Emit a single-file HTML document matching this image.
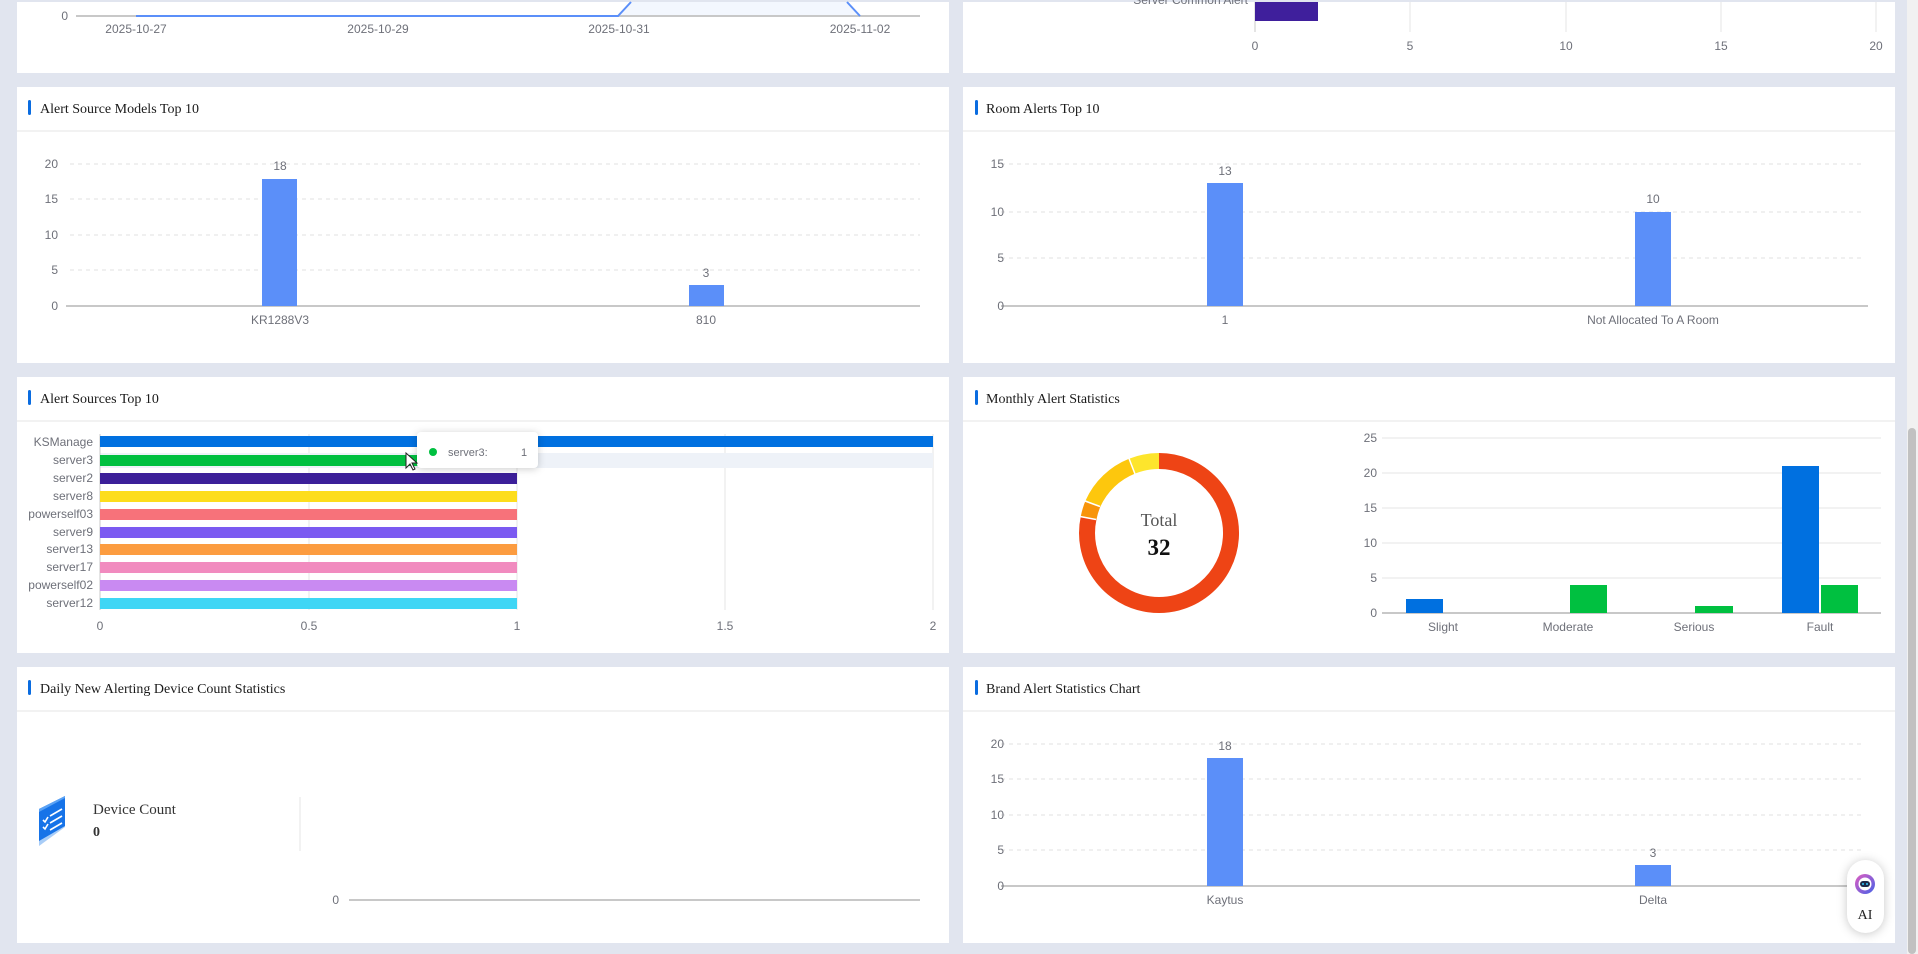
<!DOCTYPE html>
<html><head><meta charset="utf-8"><style>
html,body{margin:0;padding:0;width:1918px;height:954px;overflow:hidden;background:#e1e5ef}
svg{display:block}
.t{font-family:"Liberation Serif",serif;font-size:14px;fill:#1a1a1a}
.l{font-family:"Liberation Sans",sans-serif;font-size:12px;fill:#6e7079}
.g{stroke:#e0e0e0;stroke-width:1;stroke-dasharray:4 4}
.s{stroke:#e6e6e6;stroke-width:1}
.ax{stroke:#c8c8c8;stroke-width:2}
</style></head><body>
<svg width="1918" height="954" viewBox="0 0 1918 954" xmlns="http://www.w3.org/2000/svg">
<rect width="1918" height="954" fill="#e1e5ef"/>
<rect x="1907" y="0" width="11" height="954" fill="#f1f1f1"/>
<rect x="1908" y="428" width="8" height="526" rx="4" fill="#c1c1c1"/>

<rect x="17" y="2" width="932" height="71" fill="#fff"/>
<rect x="963" y="2" width="932" height="71" fill="#fff"/>
<g fill="#fff">
<rect x="17" y="87" width="932" height="276"/><rect x="963" y="87" width="932" height="276"/>
<rect x="17" y="377" width="932" height="276"/><rect x="963" y="377" width="932" height="276"/>
<rect x="17" y="667" width="932" height="276"/><rect x="963" y="667" width="932" height="276"/>
</g>
<g fill="#0a6ce0">
<rect x="28" y="100" width="3" height="15" rx="1.5"/><rect x="975" y="100" width="3" height="15" rx="1.5"/>
<rect x="28" y="390" width="3" height="15" rx="1.5"/><rect x="975" y="390" width="3" height="15" rx="1.5"/>
<rect x="28" y="680" width="3" height="15" rx="1.5"/><rect x="975" y="680" width="3" height="15" rx="1.5"/>
</g>
<g class="s">
<line x1="17" y1="131" x2="949" y2="131"/><line x1="963" y1="131" x2="1895" y2="131"/>
<line x1="17" y1="421" x2="949" y2="421"/><line x1="963" y1="421" x2="1895" y2="421"/>
<line x1="17" y1="711" x2="949" y2="711"/><line x1="963" y1="711" x2="1895" y2="711"/>
</g>
<text class="t" x="40" y="113">Alert Source Models Top 10</text>
<text class="t" x="986" y="113">Room Alerts Top 10</text>
<text class="t" x="40" y="403">Alert Sources Top 10</text>
<text class="t" x="986" y="403">Monthly Alert Statistics</text>
<text class="t" x="40" y="693">Daily New Alerting Device Count Statistics</text>
<text class="t" x="986" y="693">Brand Alert Statistics Chart</text>

<path d="M631 2 L847 2 L860 16 L618 16Z" fill="#f3f7fe"/>
<line x1="76" y1="16" x2="920" y2="16" class="ax"/>
<polyline points="136,16 618,16 631,2" fill="none" stroke="#5b8ff9" stroke-width="2"/>
<polyline points="847,2 860,16" fill="none" stroke="#5b8ff9" stroke-width="2"/>
<text class="l" x="68" y="20" text-anchor="end">0</text>
<g class="l" text-anchor="middle"><text x="136" y="33">2025-10-27</text><text x="378" y="33">2025-10-29</text><text x="619" y="33">2025-10-31</text><text x="860" y="33">2025-11-02</text></g>
<g class="s"><line x1="1410" y1="2" x2="1410" y2="32"/><line x1="1566" y1="2" x2="1566" y2="32"/><line x1="1721" y1="2" x2="1721" y2="32"/><line x1="1876" y1="2" x2="1876" y2="32"/></g>
<line x1="1255" y1="2" x2="1255" y2="32" stroke="#c8c8c8"/>
<rect x="1255" y="2" width="63" height="19" fill="#3f1f9c"/>
<text class="l" x="1248" y="4" text-anchor="end">Server Common Alert</text>
<g class="l" text-anchor="middle"><text x="1255" y="50">0</text><text x="1410" y="50">5</text><text x="1566" y="50">10</text><text x="1721" y="50">15</text><text x="1876" y="50">20</text></g>

<g class="g"><line x1="70" y1="164" x2="920" y2="164"/><line x1="70" y1="199" x2="920" y2="199"/><line x1="70" y1="235" x2="920" y2="235"/><line x1="70" y1="270" x2="920" y2="270"/></g>
<line x1="66" y1="306" x2="920" y2="306" class="ax"/>
<g class="l" text-anchor="end"><text x="58" y="168">20</text><text x="58" y="203">15</text><text x="58" y="239">10</text><text x="58" y="274">5</text><text x="58" y="310">0</text></g>
<rect x="262" y="179" width="35" height="127" fill="#5b8ff9"/>
<rect x="689" y="285" width="35" height="21" fill="#5b8ff9"/>
<g class="l" text-anchor="middle"><text x="280" y="170">18</text><text x="706" y="277">3</text><text x="280" y="324">KR1288V3</text><text x="706" y="324">810</text></g>
<g class="g"><line x1="1001" y1="164" x2="1864" y2="164"/><line x1="1001" y1="212" x2="1864" y2="212"/><line x1="1001" y1="258" x2="1864" y2="258"/></g>
<line x1="1001" y1="306" x2="1868" y2="306" class="ax"/>
<g class="l" text-anchor="end"><text x="1004" y="168">15</text><text x="1004" y="216">10</text><text x="1004" y="262">5</text><text x="1004" y="310">0</text></g>
<rect x="1207" y="183" width="36" height="123" fill="#5b8ff9"/>
<rect x="1635" y="212" width="36" height="94" fill="#5b8ff9"/>
<g class="l" text-anchor="middle"><text x="1225" y="175">13</text><text x="1653" y="203">10</text><text x="1225" y="324">1</text><text x="1653" y="324">Not Allocated To A Room</text></g>

<g class="s"><line x1="309" y1="434" x2="309" y2="610"/><line x1="517" y1="434" x2="517" y2="610"/><line x1="725" y1="434" x2="725" y2="610"/><line x1="933" y1="434" x2="933" y2="610"/></g>
<rect x="100" y="453" width="833" height="15" fill="#eef2f8"/>
<line x1="100" y1="434" x2="100" y2="610" stroke="#c8c8c8"/>
<rect x="100" y="436" width="833" height="11" fill="#0070e0"/>
<rect x="100" y="455" width="417" height="11" fill="#00c040"/>
<rect x="100" y="473" width="417" height="11" fill="#3c1f99"/>
<rect x="100" y="491" width="417" height="11" fill="#fddd1c"/>
<rect x="100" y="509" width="417" height="11" fill="#f7727a"/>
<rect x="100" y="527" width="417" height="11" fill="#7b5af1"/>
<rect x="100" y="544" width="417" height="11" fill="#fc9c40"/>
<rect x="100" y="562" width="417" height="11" fill="#f18bbf"/>
<rect x="100" y="580" width="417" height="11" fill="#c98af2"/>
<rect x="100" y="598" width="417" height="11" fill="#3fd6f5"/>
<g class="l" text-anchor="end">
<text x="93" y="446">KSManage</text><text x="93" y="464">server3</text><text x="93" y="482">server2</text><text x="93" y="500">server8</text><text x="93" y="518">powerself03</text><text x="93" y="536">server9</text><text x="93" y="553">server13</text><text x="93" y="571">server17</text><text x="93" y="589">powerself02</text><text x="93" y="607">server12</text></g>
<g class="l" text-anchor="middle"><text x="100" y="630">0</text><text x="309" y="630">0.5</text><text x="517" y="630">1</text><text x="725" y="630">1.5</text><text x="933" y="630">2</text></g>
<rect x="417" y="432" width="121" height="36" rx="4" fill="#fff" style="filter:drop-shadow(0 1px 4px rgba(0,0,0,.2))"/>
<circle cx="433" cy="452" r="4" fill="#00c040"/>
<text class="l" x="448" y="456" style="font-size:11px">server3:</text>
<text class="l" x="521" y="456" style="font-size:11px">1</text>
<path d="M406 453 L406 468 L410 464 L413 470 L415 469 L412 463 L417 463Z" fill="#fff" stroke="#222" stroke-width="1"/>

<g fill="none" stroke-width="16">
<path d="M1159 461 A72 72 0 1 1 1088.6 518" stroke="#ee4415"/>
<path d="M1088.6 518 A72 72 0 0 1 1093 503.5" stroke="#f8940a"/>
<path d="M1093 503.5 A72 72 0 0 1 1132 466.2" stroke="#fdc70d"/>
<path d="M1132 466.2 A72 72 0 0 1 1159 461" stroke="#fde52c"/>
</g>
<g stroke="#fff" stroke-width="1.5"><line x1="1080" y1="516.5" x2="1096" y2="519.5"/><line x1="1085" y1="501" x2="1100" y2="506.5"/><line x1="1129" y1="458.5" x2="1135" y2="474"/></g>
<text x="1159" y="526" text-anchor="middle" style="font-family:'Liberation Serif',serif;font-size:18px;fill:#555">Total</text>
<text x="1159" y="555" text-anchor="middle" style="font-family:'Liberation Serif',serif;font-size:23px;font-weight:bold;fill:#111">32</text>
<g class="s" stroke-width="1.5"><line x1="1382" y1="438" x2="1881" y2="438"/><line x1="1382" y1="473" x2="1881" y2="473"/><line x1="1382" y1="508" x2="1881" y2="508"/><line x1="1382" y1="543" x2="1881" y2="543"/><line x1="1382" y1="578" x2="1881" y2="578"/></g>
<line x1="1382" y1="613" x2="1881" y2="613" class="ax"/>
<g class="l" text-anchor="end"><text x="1377" y="442">25</text><text x="1377" y="477">20</text><text x="1377" y="512">15</text><text x="1377" y="547">10</text><text x="1377" y="582">5</text><text x="1377" y="617">0</text></g>
<rect x="1406" y="599" width="37" height="14" fill="#0070e0"/>
<rect x="1570" y="585" width="37" height="28" fill="#00c040"/>
<rect x="1695" y="606" width="38" height="7" fill="#00c040"/>
<rect x="1782" y="466" width="37" height="147" fill="#0070e0"/>
<rect x="1821" y="585" width="37" height="28" fill="#00c040"/>
<g class="l" text-anchor="middle"><text x="1443" y="631">Slight</text><text x="1568" y="631">Moderate</text><text x="1694" y="631">Serious</text><text x="1820" y="631">Fault</text></g>

<g transform="translate(38,796)">
<path d="M1 42 L27 24 L27 31 L1 50Z" fill="#a9cdf7"/>
<path d="M1 13 L27 0 L27 30 L1 45 Z" fill="#1673e8"/>
<path d="M1 13 L27 0 L27 2 L1 16Z" fill="#5aa2f5"/>
<g stroke="#fff" stroke-width="1.6" fill="none"><path d="M12 20 L24 13"/><path d="M12 27 L24 20"/><path d="M12 34 L24 27"/><path d="M5 24 L7 26 L10 21"/><path d="M5 31 L7 33 L10 28"/></g>
</g>
<text x="93" y="814" style="font-family:'Liberation Serif',serif;font-size:15px;fill:#333">Device Count</text>
<text x="93" y="836" style="font-family:'Liberation Serif',serif;font-size:14px;font-weight:bold;fill:#333">0</text>
<line x1="300" y1="797" x2="300" y2="851" stroke="#e6e6e6"/>
<line x1="349" y1="900" x2="920" y2="900" class="ax"/>
<text class="l" x="339" y="904" text-anchor="end">0</text>
<g class="g"><line x1="1001" y1="744" x2="1864" y2="744"/><line x1="1001" y1="779" x2="1864" y2="779"/><line x1="1001" y1="815" x2="1864" y2="815"/><line x1="1001" y1="850" x2="1864" y2="850"/></g>
<line x1="1001" y1="886" x2="1868" y2="886" class="ax"/>
<g class="l" text-anchor="end"><text x="1004" y="748">20</text><text x="1004" y="783">15</text><text x="1004" y="819">10</text><text x="1004" y="854">5</text><text x="1004" y="890">0</text></g>
<rect x="1207" y="758" width="36" height="128" fill="#5b8ff9"/>
<rect x="1635" y="865" width="36" height="21" fill="#5b8ff9"/>
<g class="l" text-anchor="middle"><text x="1225" y="750">18</text><text x="1653" y="857">3</text><text x="1225" y="904">Kaytus</text><text x="1653" y="904">Delta</text></g>
<rect x="1847" y="860" width="37" height="73" rx="18.5" fill="#fff" style="filter:drop-shadow(0 1px 5px rgba(0,0,0,.22))"/>
<defs><linearGradient id="ag" x1="0" y1="0" x2="1" y2="1"><stop offset="0" stop-color="#e25cc0"/><stop offset="1" stop-color="#4462e8"/></linearGradient></defs>
<circle cx="1865" cy="884" r="10" fill="url(#ag)"/>
<circle cx="1865" cy="884" r="6.5" fill="#fff"/>
<rect x="1860" y="881" width="10" height="6" rx="3" fill="#1d2a4a"/>
<circle cx="1863" cy="884" r="1" fill="#3cf"/><circle cx="1867" cy="884" r="1" fill="#3cf"/>
<text x="1865" y="919" text-anchor="middle" style="font-family:'Liberation Serif',serif;font-size:14px;fill:#222">AI</text>
</svg>
</body></html>
